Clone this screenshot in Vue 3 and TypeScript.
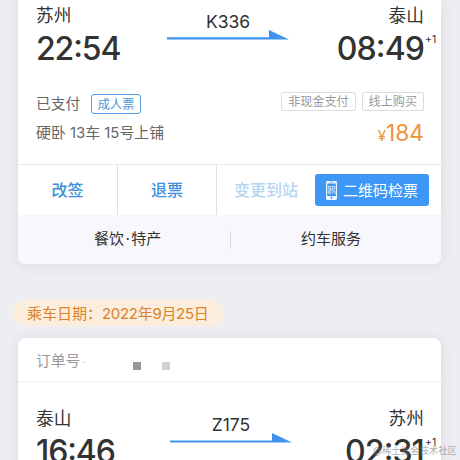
<script setup lang="ts">
interface Trip {
  from: string
  to: string
  depart: string
  arrive: string
  train: string
}

const first: Trip = { from: '苏州', to: '泰山', depart: '22:54', arrive: '08:49', train: 'K336' }
const second: Trip = { from: '泰山', to: '苏州', depart: '16:46', arrive: '02:31', train: 'Z175' }
const tags: string[] = ['非现金支付', '线上购买']
</script>

<template>
  <main class="screen">
    <section class="card card-first">
      <div class="journey">
        <div class="stop">
          <div class="station">{{ first.from }}</div>
          <div class="time">{{ first.depart }}</div>
        </div>
        <div class="route">
          <div class="train">{{ first.train }}</div>
          <svg class="arrow" width="122" height="10" viewBox="0 0 122 10"><path d="M0 7.2H102V0L122 9.5H0Z" fill="#3f92ee" /></svg>
        </div>
        <div class="stop stop-end">
          <div class="station">{{ first.to }}</div>
          <div class="time">{{ first.arrive }}<sup class="plus">+1</sup></div>
        </div>
      </div>

      <div class="details">
        <div class="status">
          <div class="paid">已支付<span class="adult">成人票</span></div>
          <div class="seat">硬卧 13车 15号上铺</div>
        </div>
        <div class="payment">
          <div class="tags">
            <span v-for="tag in tags" :key="tag" class="tag">{{ tag }}</span>
          </div>
          <div class="price"><span class="yen">¥</span>184</div>
        </div>
      </div>

      <div class="actions">
        <div class="action">改签</div>
        <div class="action">退票</div>
        <div class="action disabled">变更到站</div>
        <div class="qr">
          <svg width="11" height="19" viewBox="0 0 11 19">
            <rect x="0" y="0" width="11" height="19" rx="1.4" fill="#eef7ff" />
            <rect x="1.2" y="2.5" width="8.6" height="12.6" fill="#3d97f2" />
            <path d="M2.2 5.4h2.6v2.4H2.2zM6.3 5.4h2.6v2.4H6.3zM2.2 9.8h2.6v2.4H2.2zM6.2 9.2h1.4v1.5h1.3v2M3.4 8.8h2.8M6 12.1h1.2" fill="none" stroke="#eef7ff" stroke-width="0.8" />
            <path d="M4 1.2h3" stroke="#3d97f2" stroke-width="0.6" />
            <circle cx="5.5" cy="17" r="0.9" fill="#3d97f2" />
          </svg>
          <span class="qr-label">二维码检票</span>
        </div>
      </div>

      <div class="services">
        <div class="service">餐饮<span class="dot">·</span>特产</div>
        <div class="service service-car">约车服务</div>
      </div>
    </section>

    <div class="date">乘车日期：<span class="day">2022年9月25日</span></div>

    <section class="card card-second">
      <header class="order">
        <span>订单号</span><i class="speck"></i><i class="block"></i><i class="block light"></i>
      </header>
      <div class="journey journey-second">
        <div class="stop">
          <div class="station">{{ second.from }}</div>
          <div class="time">{{ second.depart }}</div>
        </div>
        <div class="route">
          <div class="train">{{ second.train }}</div>
          <svg class="arrow" width="122" height="10" viewBox="0 0 122 10"><path d="M0 7.5H102V0L122 9.5H0Z" fill="#3f92ee" /></svg>
        </div>
        <div class="stop stop-end">
          <div class="station">{{ second.to }}</div>
          <div class="time">{{ second.arrive }}<sup class="plus">+1</sup></div>
        </div>
      </div>
    </section>
    <div class="watermark">@稀土掘金技术社区</div>
  </main>
</template>

<style>
body {
  margin: 0;
  background: #ededf2;
}
</style>

<style scoped>
.screen {
  position: relative;
  box-sizing: border-box;
  width: 460px;
  height: 460px;
  overflow: hidden;
  padding: 0 19px 0 18px;
  background: #ededf2;
  font-family: Inter, "Noto Sans CJK SC", sans-serif;
  color: #333;
  white-space: nowrap;
}
.card {
  background: #fff;
  box-shadow: 0 1px 14px rgba(60, 60, 90, 0.1);
}
.card-first {
  height: 264px;
  border-radius: 0 0 8px 8px;
}
.card-second {
  height: 160px;
  border-radius: 8px 8px 0 0;
}
.journey {
  display: grid;
  grid-template-columns: 131px 122px 1fr;
  height: 90px;
  padding: 0 17px 0 18px;
}
.journey-second {
  grid-template-columns: 134px 122px 1fr;
  padding-top: 20px;
}
.station {
  height: 31px;
  line-height: 32px;
  font-size: 17.7px;
}
.time {
  position: relative;
  height: 36px;
  line-height: 36px;
  font-size: 32px;
  font-weight: 480;
  letter-spacing: -1.1px;
  font-feature-settings: "case" 1;
}
.stop-end {
  justify-self: end;
  text-align: right;
}
.stop-end .time {
  letter-spacing: -0.9px;
}
.plus {
  position: absolute;
  left: 100%;
  top: 2px;
  margin-left: 1px;
  font-size: 10.5px;
  line-height: 14px;
  font-weight: 400;
  letter-spacing: 0;
}
.route {
  display: flex;
  flex-direction: column;
  align-items: center;
  padding-top: 12px;
}
.train {
  height: 18px;
  line-height: 19px;
  font-size: 17.5px;
}
.arrow {
  display: block;
}
.details {
  display: flex;
  justify-content: space-between;
  height: 74px;
  padding: 0 17px 0 18px;
  color: #666;
}
.paid {
  display: flex;
  align-items: center;
  height: 28px;
  font-size: 14.7px;
  line-height: 26px;
}
.adult {
  box-sizing: border-box;
  width: 50px;
  height: 20px;
  margin-left: 11px;
  border: 1.5px solid #559fe0;
  border-radius: 3px;
  color: #4695dc;
  font-size: 12.2px;
  line-height: 19px;
  text-align: center;
}
.seat {
  height: 29px;
  line-height: 30px;
  font-size: 14.9px;
}
.tags {
  display: flex;
  gap: 6px;
  padding-top: 2px;
}
.tag {
  box-sizing: border-box;
  height: 19px;
  padding: 0 6px;
  border: 1px solid #ddd;
  border-radius: 2px;
  color: #999;
  font-size: 12.1px;
  line-height: 18px;
}
.price {
  padding-top: 8px;
  color: #ec943b;
  font-size: 22.7px;
  line-height: 28px;
  text-align: right;
}
.yen {
  font-size: 15px;
}
.actions {
  display: grid;
  grid-template-columns: 100px 99px 98px 114px;
  height: 50px;
  border-top: 1px solid #e9e9ed;
}
.action {
  box-sizing: border-box;
  border-right: 1px solid #e1e1e5;
  color: #3d90db;
  font-size: 16px;
  font-weight: 500;
  line-height: 50px;
  text-align: center;
}
.disabled {
  border-right: 0;
  color: #b5d6f2;
}
.qr {
  display: flex;
  align-items: center;
  justify-content: center;
  gap: 6px;
  align-self: center;
  height: 32px;
  border-radius: 3px;
  background: #3d97f7;
  color: #fff;
  font-size: 15px;
}
.qr-label {
  padding-bottom: 2px;
}
.services {
  display: grid;
  grid-template-columns: 213px 1fr;
  align-items: center;
  height: 49px;
  border-radius: 0 0 8px 8px;
  background: #f8f8fc;
}
.service {
  box-sizing: border-box;
  height: 18px;
  padding-left: 76px;
  border-right: 1px solid #d8d8dd;
  font-size: 15px;
  line-height: 16px;
}
.dot {
  padding: 0 1.5px;
}
.service-car {
  padding-left: 70px;
  border-right: 0;
}
.date {
  box-sizing: border-box;
  width: 210px;
  height: 26px;
  margin: 36px 0 12px -5px;
  padding-left: 14px;
  border-radius: 13px;
  background: #fdeddc;
  color: #d9832b;
  font-size: 15px;
  line-height: 27px;
}
.day {
  letter-spacing: -0.3px;
}
.order {
  display: flex;
  align-items: center;
  box-sizing: border-box;
  height: 45px;
  padding-left: 18px;
  border-bottom: 2px solid #f6f6f7;
  color: #999;
  font-size: 14.7px;
}
.speck {
  width: 1px;
  height: 1px;
  margin: 5px 0 0 4px;
  background: #aaa;
}
.block {
  width: 8px;
  height: 8px;
  margin: 12px 0 0 48px;
  background: #999;
}
.light {
  margin-left: 21px;
  background: #d2d2d2;
}
.watermark {
  position: absolute;
  right: 3px;
  top: 444px;
  color: rgba(120, 120, 120, 0.6);
  font-size: 9.4px;
  line-height: 14px;
}
</style>
